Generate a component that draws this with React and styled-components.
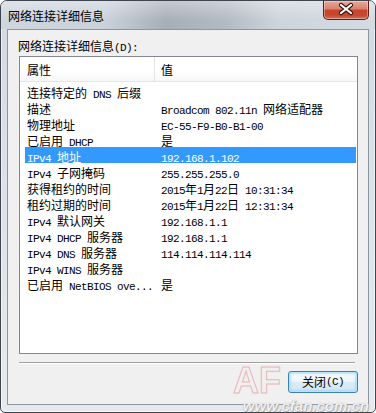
import React from "react";
import styled, { createGlobalStyle } from "styled-components";

const GlobalStyle = createGlobalStyle`
  html, body {
    margin: 0;
    padding: 0;
    background: #ffffff;
  }
  body {
    width: 376px;
    height: 413px;
    overflow: hidden;
    font-family: "Noto Sans CJK SC", sans-serif;
  }
`;

const rows = [
  ["连接特定的 DNS 后缀", ""],
  ["描述", "Broadcom 802.11n 网络适配器"],
  ["物理地址", "EC-55-F9-B0-B1-00"],
  ["已启用 DHCP", "是"],
  ["IPv4 地址", "192.168.1.102"],
  ["IPv4 子网掩码", "255.255.255.0"],
  ["获得租约的时间", "2015年1月22日 10:31:34"],
  ["租约过期的时间", "2015年1月22日 12:31:34"],
  ["IPv4 默认网关", "192.168.1.1"],
  ["IPv4 DHCP 服务器", "192.168.1.1"],
  ["IPv4 DNS 服务器", "114.114.114.114"],
  ["IPv4 WINS 服务器", ""],
  ["已启用 NetBIOS ove...", "是"],
];

const HAN = /([\u2E80-\u9FFF\uFF00-\uFFEF]+)/;

// SimSun-like mixing: full width CJK at 12px, half width latin at 6px
function SimText({ text }) {
  return text
    .split(HAN)
    .filter(Boolean)
    .map((part, i) =>
      HAN.test(part) ? <Han key={i}>{part}</Han> : <Lat key={i}>{part}</Lat>
    );
}

export default function App() {
  return (
    <>
      <GlobalStyle />
      <Window>
        <TitleBar>
          <Title>网络连接详细信息</Title>
          <CloseButton>
            <svg width="46" height="19" viewBox="0 0 46 19">
              <path d="M18 5 L28 13 M28 5 L18 13" stroke="#3a1109" strokeWidth="4.2" strokeLinecap="round" />
              <path d="M18 5 L28 13 M28 5 L18 13" stroke="#ffffff" strokeWidth="2.2" strokeLinecap="round" />
            </svg>
          </CloseButton>
        </TitleBar>

        <Client>
          <Label>
            网络连接详细信息<Lat>(D):</Lat>
          </Label>

          <ListView>
            <Header>
              <HeadCell $width={135}>属性</HeadCell>
              <HeadCell>值</HeadCell>
            </Header>
            <Rows>
              {rows.map(([name, value], i) => (
                <Row key={name} $selected={i === 4}>
                  <Cell $first>
                    <SimText text={name} />
                  </Cell>
                  <Cell>
                    <SimText text={value} />
                  </Cell>
                </Row>
              ))}
            </Rows>
          </ListView>

          <Separator />

          <Button>
            关闭<Lat>(C)</Lat>
          </Button>
        </Client>

        <Watermark>
          <Logo>AF</Logo>
          <Site>www.cfan.com.cn</Site>
        </Watermark>
      </Window>
    </>
  );
}

const Han = styled.span`
  font-family: "Noto Sans CJK SC", sans-serif;
  font-size: 12px;
  line-height: 16px;
`;

const Lat = styled.span`
  font-family: "Liberation Mono", monospace;
  font-size: 11px;
  line-height: 16px;
  letter-spacing: -0.6px;
  white-space: pre;
`;

const Window = styled.div`
  position: relative;
  box-sizing: border-box;
  width: 376px;
  height: 413px;
  display: flex;
  flex-direction: column;
  border: 1px solid #3d454e;
  border-radius: 7px 7px 5px 5px;
  overflow: hidden;
  background: linear-gradient(to bottom, #d2d9e1 0%, #dce2e8 45%, #e6eaef 100%);
  box-shadow: inset 0 0 0 1px rgba(255, 255, 255, 0.55);
`;

const TitleBar = styled.div`
  height: 28px;
  display: flex;
  align-items: center;
  background:
    linear-gradient(to bottom, rgba(255, 255, 255, 0.35), rgba(255, 255, 255, 0) 70%),
    linear-gradient(
      to right,
      #cfd6de 0%,
      #c9d1da 28%,
      #a6aeb7 44%,
      #b2bac3 60%,
      #cdd4dc 74%,
      #d4dbe3 100%
    );
`;

const Title = styled.div`
  margin-left: 7px;
  margin-top: 1px;
  font-size: 12px;
  line-height: 16px;
  color: #000;
`;

const CloseButton = styled.div`
  align-self: flex-start;
  margin-left: auto;
  margin-right: 6px;
  width: 46px;
  height: 19px;
  box-sizing: border-box;
  border: 1px solid #5a1f15;
  border-top: none;
  border-radius: 0 0 5px 5px;
  background: linear-gradient(
    to bottom,
    #e9a99b 0%,
    #d9806c 45%,
    #c7452c 50%,
    #c24a30 80%,
    #d6745a 100%
  );
  box-shadow: inset 0 0 0 1px rgba(255, 255, 255, 0.35);
  svg {
    display: block;
    margin: -1px 0 0 -1px;
  }
`;

const Client = styled.div`
  flex: 1;
  display: flex;
  flex-direction: column;
  margin: 0 6px 7px 6px;
  border: 1px solid #8a96a3;
  background: #f0f0f0;
`;

const Label = styled.div`
  margin: 8px 0 0 10px;
  font-size: 12px;
  line-height: 16px;
  height: 16px;
  color: #000;
`;

const ListView = styled.div`
  box-sizing: border-box;
  margin: 2px 0 0 11px;
  width: 339px;
  height: 298px;
  border: 1px solid #828790;
  background: #ffffff;
`;

const Header = styled.div`
  box-sizing: border-box;
  height: 25px;
  display: flex;
  border-bottom: 1px solid #e5e5e5;
  background: linear-gradient(to bottom, #ffffff 0%, #ffffff 55%, #f6f7f8 100%);
`;

const HeadCell = styled.div`
  box-sizing: border-box;
  width: ${(p) => (p.$width ? `${p.$width}px` : "auto")};
  flex: ${(p) => (p.$width ? "none" : 1)};
  padding-left: ${(p) => (p.$width ? 7 : 6)}px;
  border-right: ${(p) => (p.$width ? "1px solid #e3e3e3" : "none")};
  font-size: 12px;
  line-height: 26px;
  color: #000;
`;

const Rows = styled.div`
  padding-top: 1px;
`;

const Row = styled.div`
  display: grid;
  grid-template-columns: 136px 1fr;
  height: 16px;
  margin: 0 1px 0 5px;
  line-height: 16px;
  white-space: nowrap;
  color: ${(p) => (p.$selected ? "#ffffff" : "#000000")};
  background: ${(p) => (p.$selected ? "#3399ff" : "transparent")};
`;

const Cell = styled.div`
  padding-left: ${(p) => (p.$first ? 2 : 0)}px;
  height: 16px;
`;

const Separator = styled.div`
  margin: 8px 0 0 11px;
  width: 336px;
  border-top: 1px solid #a0a0a0;
  border-bottom: 1px solid #ffffff;
`;

const Button = styled.div`
  box-sizing: border-box;
  align-self: flex-end;
  margin: 7px 10px 0 0;
  width: 70px;
  height: 22px;
  display: flex;
  align-items: center;
  justify-content: center;
  border: 1px solid #3c7fb1;
  border-radius: 3px;
  background: linear-gradient(to bottom, #f7fbfe 0%, #ecf5fb 50%, #dcecf7 50%, #d2e7f6 100%);
  box-shadow: inset 0 0 0 1px #b8e3f7, inset 0 0 2px 2px rgba(120, 200, 240, 0.45);
  font-size: 12px;
  line-height: 16px;
  color: #000;
`;

const Watermark = styled.div`
  position: absolute;
  right: 6px;
  bottom: -2px;
  width: 140px;
  height: 50px;
  pointer-events: none;
`;

const Logo = styled.div`
  position: absolute;
  left: 4px;
  top: 0;
  font-family: "Liberation Sans", sans-serif;
  font-weight: bold;
  font-size: 36px;
  line-height: 34px;
  height: 34px;
  color: transparent;
  -webkit-text-stroke: 1px rgba(225, 120, 120, 0.5);
`;

const Site = styled.div`
  position: absolute;
  right: 0;
  bottom: 0;
  font-family: "Liberation Sans", sans-serif;
  font-weight: bold;
  font-style: italic;
  font-size: 15px;
  line-height: 16px;
  color: rgba(255, 255, 255, 0.85);
  text-shadow: 0 0 1px #9a9a9a, 1px 1px 1px #b0b0b0;
`;
